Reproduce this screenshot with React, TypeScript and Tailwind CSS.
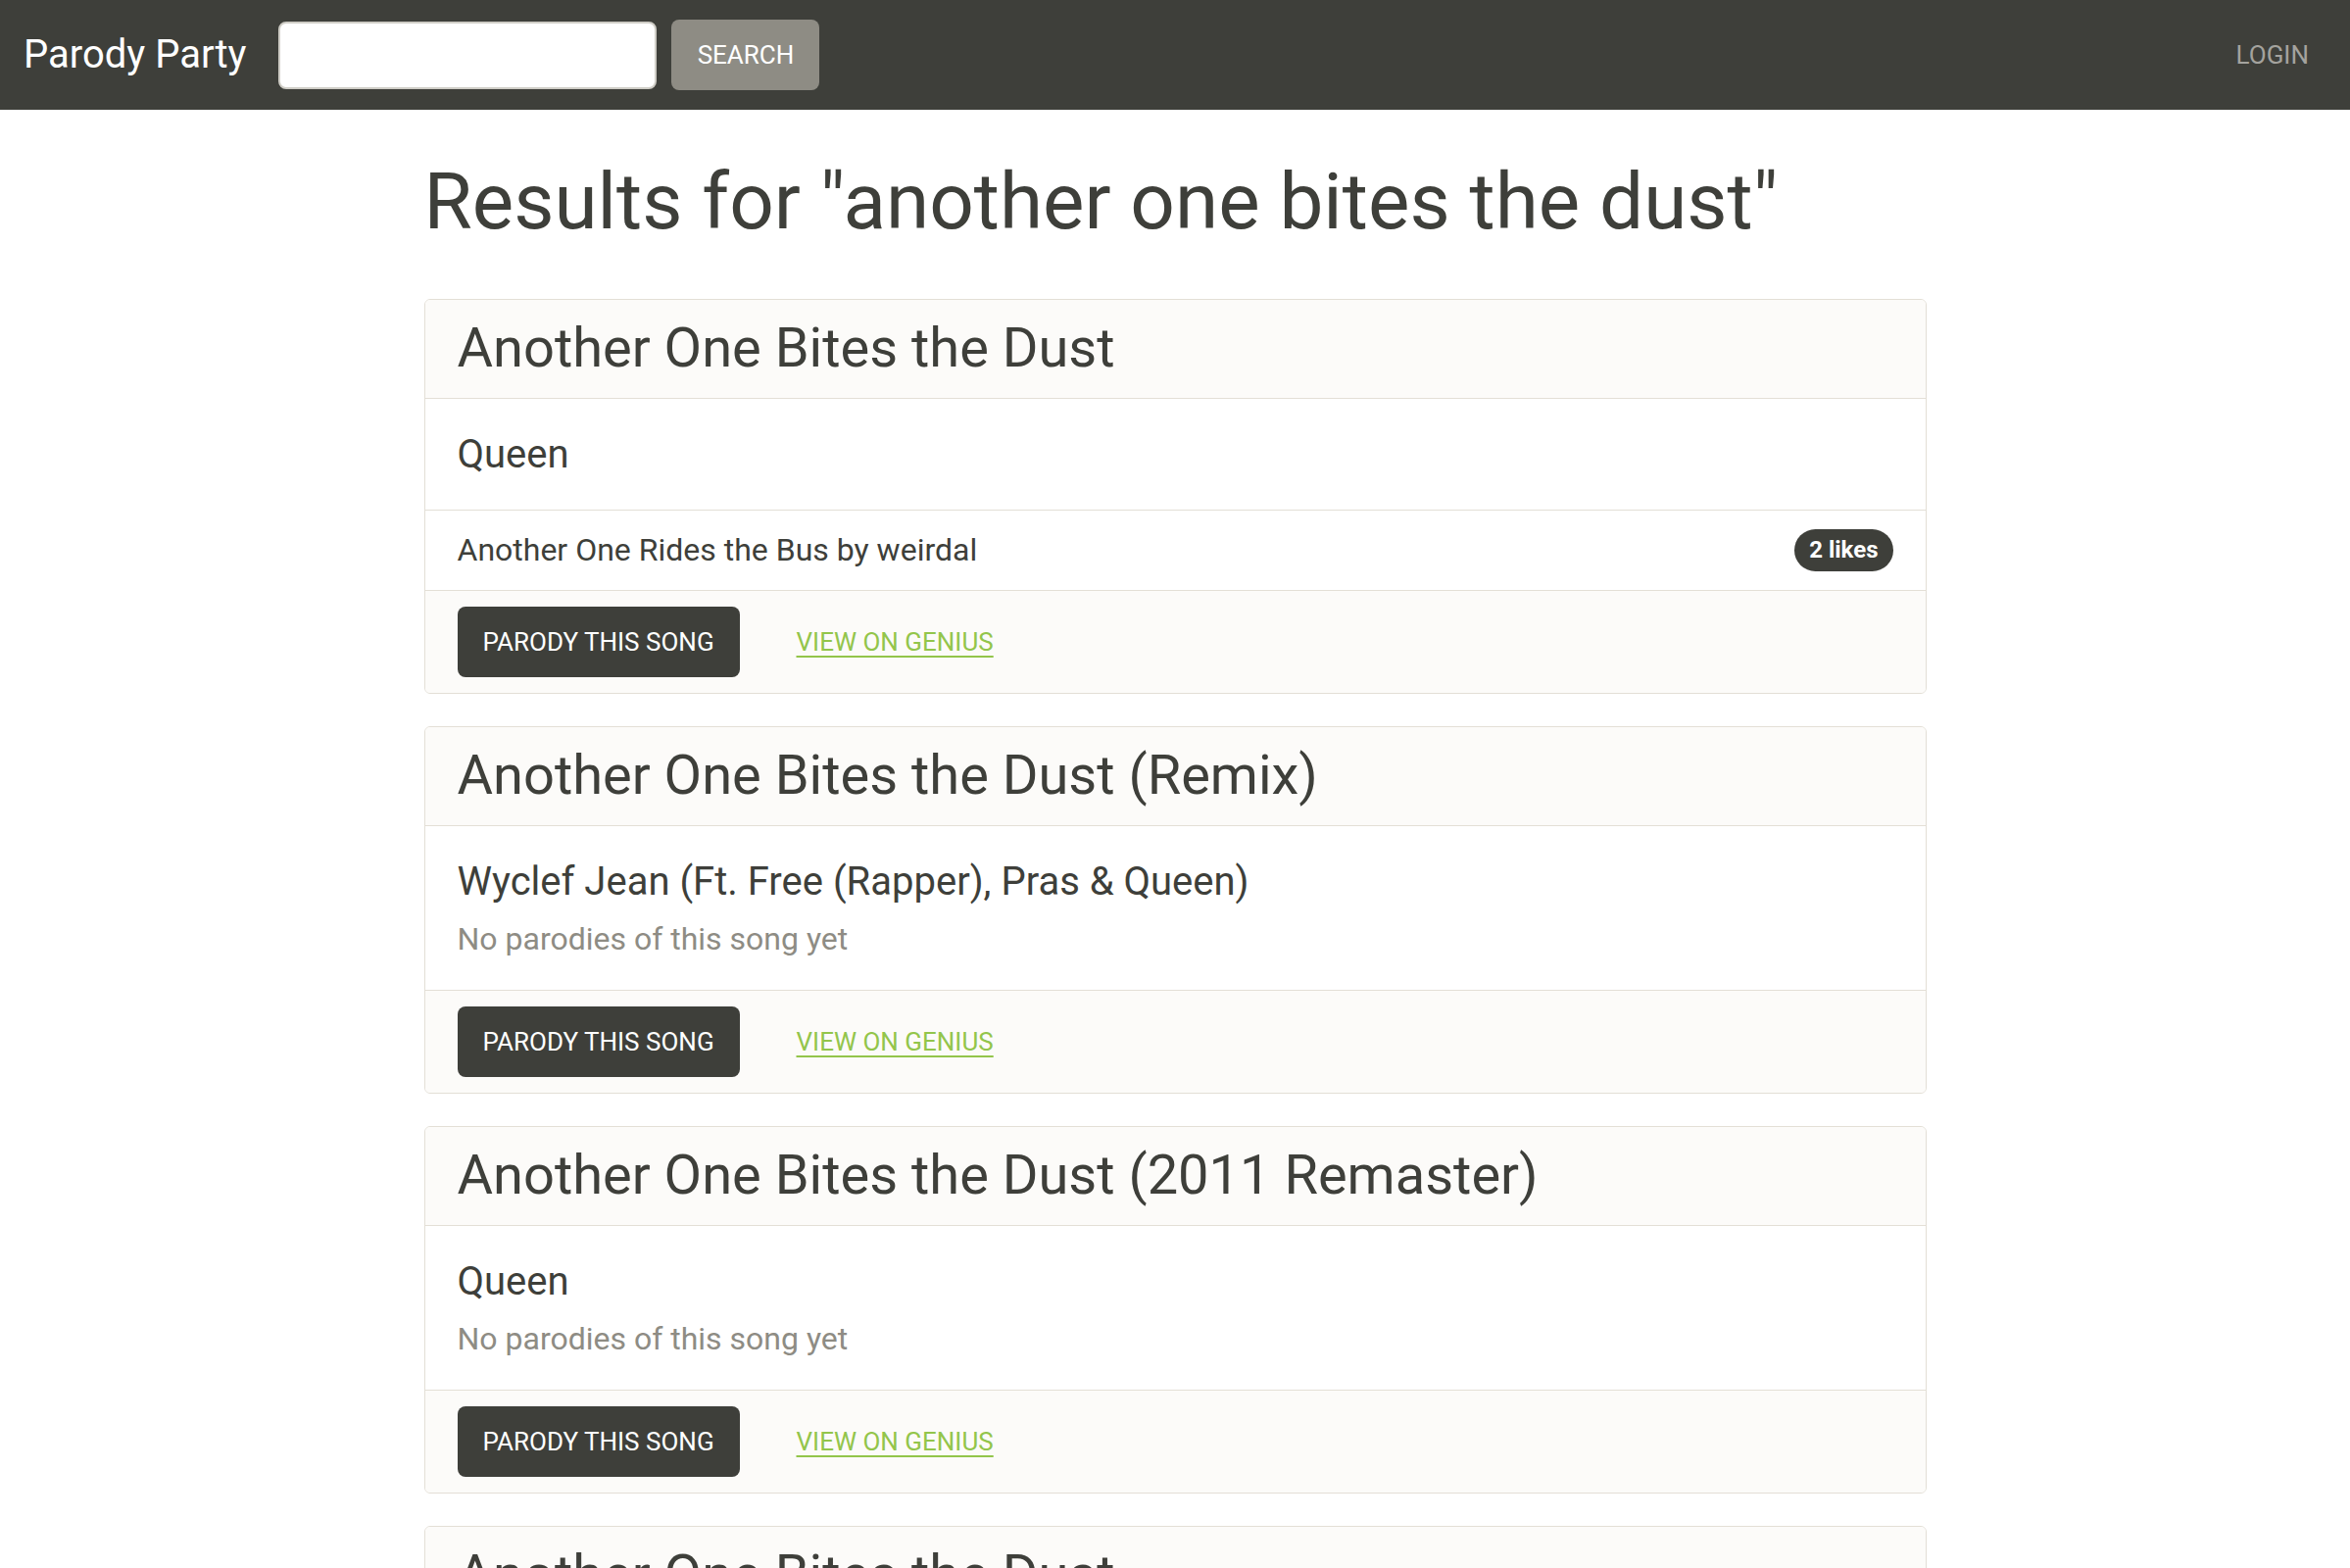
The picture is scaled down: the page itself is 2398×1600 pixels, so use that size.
import React from "react";

interface Song {
  title: string;
  artist: string;
  parodies: { title: string; likes: number }[];
}

const songs: Song[] = [
  {
    title: "Another One Bites the Dust",
    artist: "Queen",
    parodies: [{ title: "Another One Rides the Bus by weirdal", likes: 2 }],
  },
  {
    title: "Another One Bites the Dust (Remix)",
    artist: "Wyclef Jean (Ft. Free (Rapper), Pras & Queen)",
    parodies: [],
  },
  {
    title: "Another One Bites the Dust (2011 Remaster)",
    artist: "Queen",
    parodies: [],
  },
  {
    title: "Another One Bites the Dust",
    artist: "Queen",
    parodies: [],
  },
];

function Navbar() {
  return (
    <nav className="flex items-center h-[112px] bg-[#3e3f3a] pl-[24px] pr-[42px]">
      <a className="text-white text-[40px] leading-none mr-[33px]">Parody Party</a>
      <input
        type="text"
        className="w-[386px] h-[69px] bg-white rounded-[8px] border-2 border-[#cfcdc6] outline-none"
      />
      <button className="ml-[15px] w-[151px] h-[72px] rounded-[8px] bg-[#8e8c84] text-white text-[26px] uppercase">
        Search
      </button>
      <a className="ml-auto text-[26px] uppercase text-[#a4a39e]">Login</a>
    </nav>
  );
}

function SongCard({ song }: { song: Song }) {
  const empty = song.parodies.length === 0;
  return (
    <div className="rounded-[6px] border border-[#e3dfd6] bg-white overflow-hidden">
      <div className="h-[101px] flex items-center px-[33px] pb-[2px] bg-[#fcfbf9] border-b border-[#e3dfd6]">
        <h3 className="text-[56px] leading-[67px] text-[#3e3f3a]">{song.title}</h3>
      </div>
      <div className={empty ? "px-[33px] pt-[33px] pb-[28px]" : "px-[33px] pt-[33px] pb-[32px]"}>
        <h5 className="text-[40px] leading-[48px] text-[#3e3f3a]">{song.artist}</h5>
        {empty && (
          <p className="mt-[10px] text-[32px] leading-[48px] text-[#8e8c84]">No parodies of this song yet</p>
        )}
      </div>
      {song.parodies.map((p) => (
        <div
          key={p.title}
          className="h-[82px] flex items-center justify-between px-[33px] pb-[1px] border-t border-[#e3dfd6]"
        >
          <span className="text-[32px] text-[#3e3f3a]">{p.title}</span>
          <span className="h-[43px] px-[15px] flex items-center rounded-full bg-[#3e3f3a] text-white text-[24px] font-bold">
            {p.likes} likes
          </span>
        </div>
      ))}
      <div className="flex items-center px-[33px] py-[16px] bg-[#fcfbf9] border-t border-[#e3dfd6]">
        <button className="h-[72px] w-[288px] rounded-[8px] bg-[#3e3f3a] text-white text-[26px] uppercase">
          Parody this song
        </button>
        <a className="ml-[58px] text-[26px] uppercase text-[#93c54b] underline underline-offset-[5px] decoration-2">
          View on Genius
        </a>
      </div>
    </div>
  );
}

export default function App() {
  return (
    <div className="min-h-screen bg-white font-['Roboto',sans-serif] text-[#3e3f3a]">
      <Navbar />
      <main className="w-[1533px] mx-auto pt-[46px]">
        <h1 className="text-[80px] leading-[96px] text-[#3e3f3a] mb-[51px]">
          Results for "another one bites the dust"
        </h1>
        <div className="flex flex-col gap-[33px] pb-[40px]">
          {songs.map((s, i) => (
            <SongCard key={i} song={s} />
          ))}
        </div>
      </main>
    </div>
  );
}
